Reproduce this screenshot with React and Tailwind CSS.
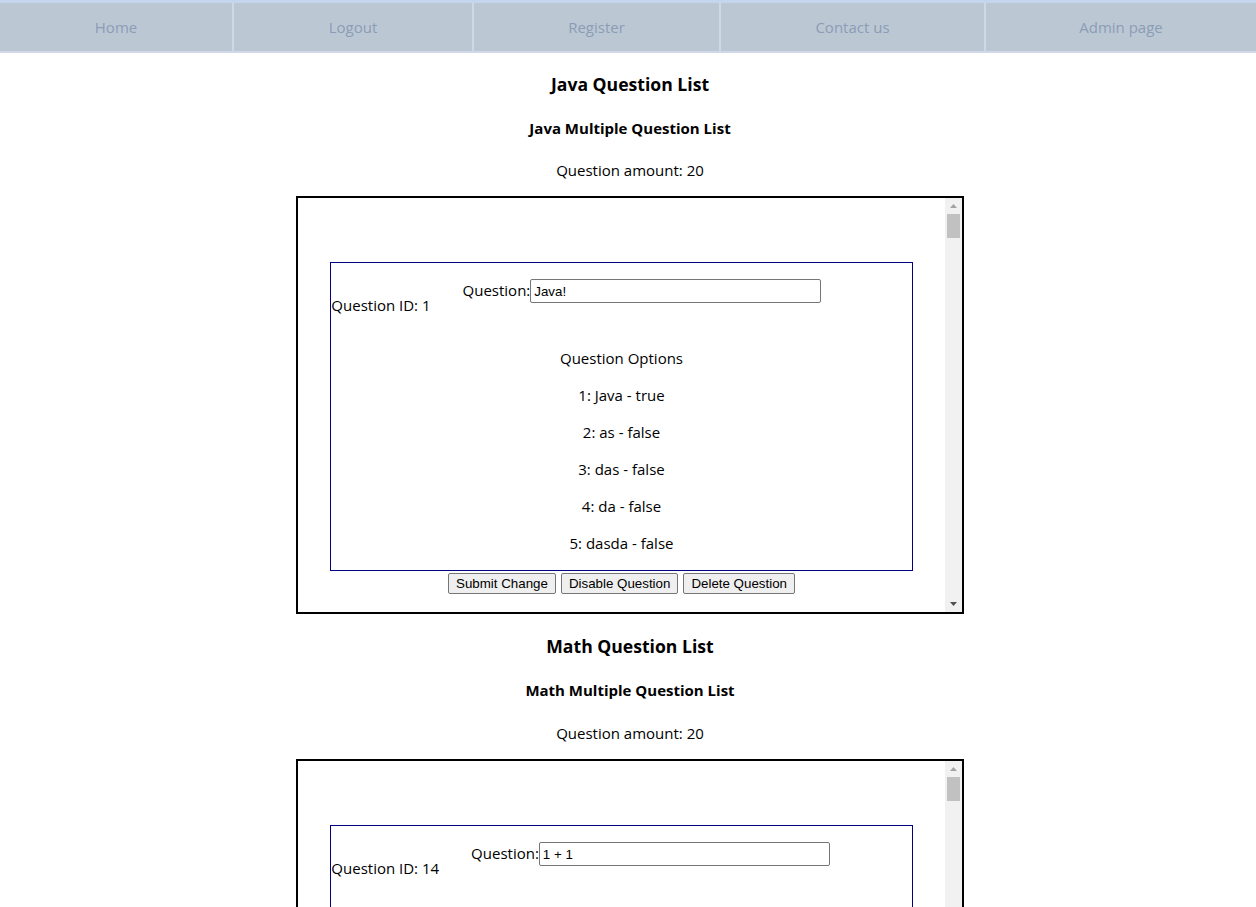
import React from "react";

const navItems = [
  { label: "Home", w: "w-[232px]" },
  { label: "Logout", w: "w-[240px]" },
  { label: "Register", w: "w-[247px]" },
  { label: "Contact us", w: "w-[265px]" },
  { label: "Admin page", w: "flex-1" },
];

const javaQuestions = [
  {
    id: 1,
    text: "Java!",
    options: ["Java - true", "as - false", "das - false", "da - false", "dasda - false"],
  },
  ...Array.from({ length: 19 }, (_, i) => ({
    id: i + 2,
    text: "Java question " + (i + 2),
    options: ["a - true", "b - false", "c - false", "d - false"],
  })),
];

const mathQuestions = [
  {
    id: 14,
    text: "1 + 1",
    options: ["2 - true", "3 - false", "4 - false", "5 - false"],
  },
  ...Array.from({ length: 19 }, (_, i) => ({
    id: i + 15,
    text: i + 2 + " + " + (i + 2),
    options: ["a - true", "b - false", "c - false", "d - false"],
  })),
];

const sans = { fontFamily: '"Segoe UI", "Open Sans", "Noto Sans", sans-serif' };
const arial = { fontFamily: '"Liberation Sans", Arial, sans-serif' };

function Btn({ children }) {
  return (
    <button
      className="h-[21px] px-[7px] border border-[#767676] rounded-[2px] bg-[#efefef] text-[13.33px] leading-[15px] text-black"
      style={arial}
    >
      {children}
    </button>
  );
}

function QuestionCard({ q }) {
  return (
    <div className="mb-[64px]">
      <div className="w-[90%] mx-auto border border-[#000080] pt-[16px] pb-[16px]">
        <div className="flex items-start">
          <span className="mt-[16px] leading-[21px] whitespace-nowrap">Question ID: {q.id}</span>
          <label className="ml-[32px] flex items-start">
            <span className="leading-[21px] pt-[1px]">Question:</span>
            <input
              defaultValue={q.text}
              className="w-[291px] h-[24px] border border-[#767676] rounded-[2px] px-[3px] text-[13.33px] text-black outline-none"
              style={arial}
            />
          </label>
        </div>
        <p className="mt-[32px] text-center leading-[21px]">Question Options</p>
        {q.options.map((o, i) => (
          <p key={i} className="mt-[16px] text-center leading-[21px]">
            {i + 1}: {o}
          </p>
        ))}
      </div>
      <div className="flex justify-center gap-[5px] mt-[2px]">
        <Btn>Submit Change</Btn>
        <Btn>Disable Question</Btn>
        <Btn>Delete Question</Btn>
      </div>
    </div>
  );
}

function FakeScrollbar() {
  return (
    <div className="w-[17px] bg-[#f1f1f1] flex flex-col items-center justify-between">
      <div className="w-full">
        <div className="h-[16px] flex items-center justify-center">
          <svg width="7" height="4" viewBox="0 0 7 4">
            <polygon points="0,4 3.5,0 7,4" fill="#a3a3a3" />
          </svg>
        </div>
        <div className="mx-[2px] h-[24px] bg-[#c1c1c1]" />
      </div>
      <div className="h-[16px] w-full flex items-center justify-center">
        <svg width="7" height="4" viewBox="0 0 7 4">
          <polygon points="0,0 7,0 3.5,4" fill="#505050" />
        </svg>
      </div>
    </div>
  );
}

function Section({ title, sub, questions, titleMt, amountMt }) {
  return (
    <section className="flex flex-col items-center pl-[4px]">
      <h3 className={titleMt + " text-[17.6px] font-bold leading-[25px]"}>{title}</h3>
      <h4 className="mt-[21px] text-[15px] font-bold leading-[21px]">{sub}</h4>
      <p className={amountMt + " leading-[21px]"}>Question amount: 20</p>
      <div className="mt-[15px] w-[668px] h-[418px] border-2 border-black flex">
        <div className="flex-1 overflow-hidden">
          <div className="pt-[64px]">
            {questions.map((q) => (
              <QuestionCard key={q.id} q={q} />
            ))}
          </div>
        </div>
        <FakeScrollbar />
      </div>
    </section>
  );
}

export default function App() {
  return (
    <div className="min-h-screen bg-white text-black text-[15px]" style={sans}>
      <nav className="flex h-[53px] border-t-[3px] border-t-[#c6d5ee] border-b-2 border-b-[#d0d8ea] bg-[#bbc8d3]">
        {navItems.map((n, i) => (
          <div
            key={n.label}
            className={
              n.w +
              " flex items-center justify-center text-[#8b9cb7] " +
              (i > 0 ? "border-l-2 border-l-[#cfd7e8]" : "")
            }
          >
            {n.label}
          </div>
        ))}
      </nav>
      <Section
        title="Java Question List"
        sub="Java Multiple Question List"
        questions={javaQuestions}
        titleMt="mt-[19px]"
        amountMt="mt-[21px]"
      />
      <Section
        title="Math Question List"
        sub="Math Multiple Question List"
        questions={mathQuestions}
        titleMt="mt-[20px]"
        amountMt="mt-[22px]"
      />
    </div>
  );
}
